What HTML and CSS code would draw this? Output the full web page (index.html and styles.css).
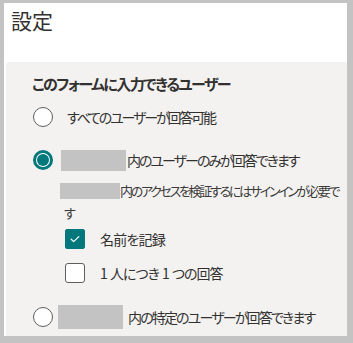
FILE: index.html
```html
<!DOCTYPE html>
<html lang="ja">
<head>
<meta charset="utf-8">
<link rel="stylesheet" href="styles.css">
</head>
<body>
<div class="frame">
  <div class="title">設定</div>
  <div class="panel">
    <div class="heading">このフォームに入力できるユーザー</div>
    <div class="row row-1">
      <span class="radio"></span>
      <span class="label t-1">すべてのユーザーが回答可能</span>
    </div>
    <div class="row row-2">
      <svg class="radio-on" width="20" height="20" viewBox="0 0 20 20"><circle cx="10" cy="10" r="10" fill="#03787c"/><circle cx="10" cy="10" r="7" fill="#fff"/><circle cx="10" cy="10" r="6" fill="#03787c"/></svg>
      <span class="redact r-2"></span>
      <span class="label t-2">内のユーザーのみが回答できます</span>
    </div>
    <div class="sub"><span class="redact r-sub"></span>内のアクセスを検証するにはサインインが必要です</div>
    <div class="row check-row cr-1">
      <span class="check on"><svg width="20" height="20" viewBox="0 0 20 20"><path d="M6.2 10.2 L8.7 12.6 L13.8 7.6" fill="none" stroke="#fff" stroke-width="1.2" stroke-linecap="round" stroke-linejoin="round"/></svg></span>
      <span class="label t-c1">名前を記録</span>
    </div>
    <div class="row check-row cr-2">
      <span class="check"></span>
      <span class="label t-c2">1 人につき 1 つの回答</span>
    </div>
    <div class="row row-3">
      <span class="radio"></span>
      <span class="redact r-3"></span>
      <span class="label t-3">内の特定のユーザーが回答できます</span>
    </div>
  </div>
</div>
</body>
</html>
```
FILE: styles.css
```css
html, body {
  margin: 0;
  padding: 0;
  background: #c3c3c3;
  overflow: hidden;
}
body {
  font-family: "Noto Sans CJK JP", sans-serif;
  color: #323130;
  font-feature-settings: "palt" 1;
}
.frame {
  margin: 3px 6px 0 4px;
  height: 333px;
  background: #fff;
  overflow: hidden;
}
.title {
  font-size: 21px;
  line-height: 28px;
  padding: 3px 7px 0;
  font-weight: 400;
}
.panel {
  margin: 28px 0 0 2px;
  background: #f3f2f1;
  border-top-left-radius: 4px;
  padding: 12px 0 0 26px;
  height: 300px;
}
.heading {
  font-size: 15px;
  font-weight: 700;
  line-height: 20px;
  letter-spacing: -1.6px;
}
.row {
  display: flex;
  align-items: center;
  height: 28px;
  font-size: 14px;
  white-space: nowrap;
}
.t-1 { margin-left: 14px; letter-spacing: -2.15px; }
.t-2 { letter-spacing: -2px; }
.t-3 { letter-spacing: -1.85px; }
.t-c1 { letter-spacing: -0.8px; }
.t-c2 { letter-spacing: -1px; word-spacing: 1px; }
.row-1 { margin-top: 9px; }
.row-2 { margin-top: 15px; }
.row-3 { margin-top: 16px; }
.radio {
  box-sizing: border-box;
  width: 20px;
  height: 20px;
  border: 1px solid #605e5c;
  border-radius: 50%;
  background: #fff;
  margin-left: 1px;
  flex: none;
}
.radio-on {
  margin-left: 1px;
  flex: none;
}
.redact {
  display: inline-block;
  background: #c3c3c3;
  flex: none;
}
.r-2 { width: 65px; height: 21px; margin-left: 8px; margin-right: 1px; }
.r-3 { width: 65px; height: 24px; margin-left: 5px; margin-right: 5px; }
.sub {
  margin-top: 6px;
  padding-left: 32px;
  width: 278px;
  font-size: 13px;
  line-height: 22px;
  letter-spacing: -2.3px;
  color: #3b3a39;
}
.r-sub {
  width: 60px;
  height: 16px;
  margin-left: -4px;
  margin-right: 0;
  vertical-align: -3px;
}
.check-row { padding-left: 33px; }
.cr-1 { margin-top: 1px; }
.cr-2 { margin-top: 6px; }
.check {
  box-sizing: border-box;
  width: 20px;
  height: 20px;
  border: 1px solid #605e5c;
  border-radius: 3px;
  background: #fff;
  margin-right: 15px;
  flex: none;
}
.check.on {
  background: #03787c;
  border-color: #03787c;
  border-radius: 2px;
}
.check svg { display: block; margin: -1px; }
```
